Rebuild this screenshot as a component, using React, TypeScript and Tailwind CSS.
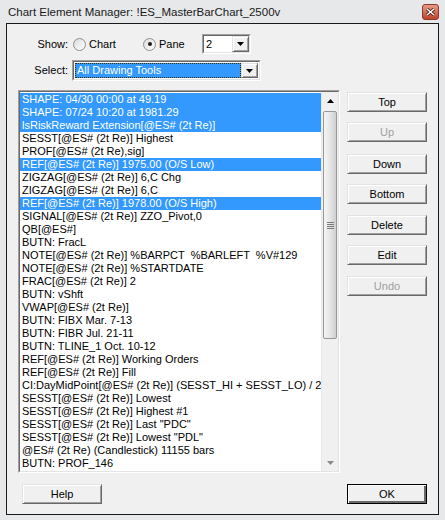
import React from 'react';

const ITEMS: [string, boolean][] = [
  ['SHAPE: 04/30 00:00 at 49.19', true],
  ['SHAPE: 07/24 10:20 at 1981.29', true],
  ['lsRiskReward Extension[@ES# (2t Re)]', true],
  ['SESST[@ES# (2t Re)] Highest', false],
  ['PROF[@ES# (2t Re),sig]', false],
  ['REF[@ES# (2t Re)] 1975.00 (O/S Low)', true],
  ['ZIGZAG[@ES# (2t Re)] 6,C Chg', false],
  ['ZIGZAG[@ES# (2t Re)] 6,C', false],
  ['REF[@ES# (2t Re)] 1978.00 (O/S High)', true],
  ['SIGNAL[@ES# (2t Re)] ZZO_Pivot,0', false],
  ['QB[@ES#]', false],
  ['BUTN: FracL', false],
  ['NOTE[@ES# (2t Re)] %BARPCT  %BARLEFT  %V#129', false],
  ['NOTE[@ES# (2t Re)] %STARTDATE', false],
  ['FRAC[@ES# (2t Re)] 2', false],
  ['BUTN: vShft', false],
  ['VWAP[@ES# (2t Re)]', false],
  ['BUTN: FIBX Mar. 7-13', false],
  ['BUTN: FIBR Jul. 21-11', false],
  ['BUTN: TLINE_1 Oct. 10-12', false],
  ['REF[@ES# (2t Re)] Working Orders', false],
  ['REF[@ES# (2t Re)] Fill', false],
  ['CI:DayMidPoint[@ES# (2t Re)] (SESST_HI + SESST_LO) / 2 "MidPoint"', false],
  ['SESST[@ES# (2t Re)] Lowest', false],
  ['SESST[@ES# (2t Re)] Highest #1', false],
  ['SESST[@ES# (2t Re)] Last "PDC"', false],
  ['SESST[@ES# (2t Re)] Lowest "PDL"', false],
  ['@ES# (2t Re) (Candlestick) 11155 bars', false],
  ['BUTN: PROF_146', false],
];

// margin before each side button, measured off the dialog
const SIDE_BUTTONS: { label: string; disabled?: boolean; mt: string }[] = [
  { label: 'Top', mt: 'mt-0' },
  { label: 'Up', disabled: true, mt: 'mt-[10px]' },
  { label: 'Down', mt: 'mt-[12px]' },
  { label: 'Bottom', mt: 'mt-[10px]' },
  { label: 'Delete', mt: 'mt-[11px]' },
  { label: 'Edit', mt: 'mt-[10px]' },
  { label: 'Undo', disabled: true, mt: 'mt-[11px]' },
];

function Button({ label, disabled, isDefault, className = '' }: { label: string; disabled?: boolean; isDefault?: boolean; className?: string }) {
  return (
    <div
      className={`flex h-[20px] w-[80px] items-center justify-center border bg-[#f0f0f0] ${
        isDefault
          ? 'border-black shadow-[inset_1px_1px_0_#ffffff,inset_-2px_-2px_0_#696969]'
          : 'border-t-[#e3e3e3] border-l-[#e3e3e3] border-r-[#696969] border-b-[#696969] shadow-[inset_1px_1px_0_#ffffff,inset_-1px_-1px_0_#a0a0a0]'
      } ${disabled ? 'text-[#a0a0a0]' : 'text-black'} ${className}`}
    >
      {label}
    </div>
  );
}

function Arrow({ color = '#000000' }: { color?: string }) {
  return (
    <svg width="7" height="4" viewBox="0 0 7 4">
      <path d="M0 0h7L3.5 4z" fill={color} />
    </svg>
  );
}

function ComboButton() {
  return (
    <div className="flex h-full w-[17px] items-center justify-center border border-t-[#e3e3e3] border-l-[#e3e3e3] border-r-[#696969] border-b-[#696969] bg-[#f0f0f0] shadow-[inset_1px_1px_0_#ffffff,inset_-1px_-1px_0_#a0a0a0]">
      <Arrow />
    </div>
  );
}

function Radio({ checked }: { checked?: boolean }) {
  return (
    <span className="flex h-[13px] w-[13px] items-center justify-center rounded-full border border-[#8f8f8f] bg-gradient-to-br from-[#dcdcdc] to-white">
      {checked && <span className="h-[4px] w-[4px] rounded-full bg-[#1c1c1c]" />}
    </span>
  );
}

export default function App() {
  return (
    <div className="flex h-[520px] w-[445px] flex-col overflow-hidden bg-[#e6e8ea] text-[11px] leading-[13px] text-black [font-family:'Liberation_Sans',Arial,sans-serif]">
      {/* title bar */}
      <div className="flex h-[23px] items-center pl-[8px] pr-[6px]">
        <span className="pt-[1px] text-[11.5px] text-[#1a1a1a]">Chart Element Manager: !ES_MasterBarChart_2500v</span>
        <div className="ml-auto flex h-[16px] w-[17px] items-center justify-center rounded-[3px] border border-[#8a3a2a] bg-gradient-to-b from-[#e59a88] to-[#c0432b]">
          <svg width="9" height="8" viewBox="0 0 9 8">
            <path d="M1 1l7 6M8 1L1 7" stroke="#4a1a10" strokeWidth="3" />
            <path d="M1 1l7 6M8 1L1 7" stroke="#ffffff" strokeWidth="1.6" />
          </svg>
        </div>
      </div>

      {/* client area */}
      <div className="ml-[6px] flex h-[492px] w-[433px] flex-col border border-[#1a1a1a] bg-[#f0f0f0]">
        <div className="mt-[10px] flex h-[20px] items-center">
          <span className="w-[61px] text-right">Show:</span>
          <div className="ml-[5px] flex w-[70px] items-center">
            <Radio />
            <span className="ml-[3px]">Chart</span>
          </div>
          <div className="flex w-[59px] items-center">
            <Radio checked />
            <span className="ml-[3px]">Pane</span>
          </div>
          <div className="flex h-[20px] w-[49px] border border-t-[#a0a0a0] border-l-[#a0a0a0] border-r-white border-b-white">
            <div className="flex flex-1 border border-t-[#696969] border-l-[#696969] border-r-[#e3e3e3] border-b-[#e3e3e3] bg-white">
              <span className="flex-1 pl-[2px] pt-[2px]">2</span>
              <ComboButton />
            </div>
          </div>
        </div>

        <div className="mt-[6px] flex h-[21px] items-center">
          <span className="w-[61px] text-right">Select:</span>
          <div className="ml-[4px] flex h-[21px] w-[189px] border border-t-[#a0a0a0] border-l-[#a0a0a0] border-r-white border-b-white">
            <div className="flex flex-1 border border-t-[#696969] border-l-[#696969] border-r-[#e3e3e3] border-b-[#e3e3e3] bg-white p-[1px]">
              <span className="flex flex-1 items-center border border-dotted border-[#3a2a00] bg-[#3399ff] pl-[1px] text-white">
                All Drawing Tools
              </span>
              <ComboButton />
            </div>
          </div>
        </div>

        <div className="mt-[9px] flex">
          {/* list box */}
          <div className="ml-[11px] flex h-[383px] w-[322px] border border-t-[#a0a0a0] border-l-[#a0a0a0] border-r-white border-b-white">
            <div className="flex flex-1 border border-t-[#696969] border-l-[#696969] border-r-[#e3e3e3] border-b-[#e3e3e3] bg-white">
              <div className="w-[301px] overflow-hidden pt-[1px]">
                {ITEMS.map(([text, sel], i) => (
                  <div
                    key={i}
                    className={`h-[13px] whitespace-pre pl-[2px] ${sel ? 'bg-[#3399ff] text-white' : ''}`}
                  >
                    {text}
                  </div>
                ))}
              </div>
              {/* scroll bar */}
              <div className="flex w-[17px] flex-col border-l border-[#e8e8e8] bg-[#f0f0f0]">
                <div className="flex h-[17px] items-center justify-center">
                  <svg width="7" height="4" viewBox="0 0 7 4">
                    <path d="M0 4h7L3.5 0z" fill="#000000" />
                  </svg>
                </div>
                <div className="mx-[1px] mt-[2px] flex h-[228px] flex-col items-center justify-center gap-[1px] rounded-[2px] border border-[#979797] bg-gradient-to-r from-[#f4f4f4] via-[#e6e6e6] to-[#cfcfcf]">
                  <span className="h-[1px] w-[7px] bg-[#7a7a7a]" />
                  <span className="h-[1px] w-[7px] bg-[#7a7a7a]" />
                  <span className="h-[1px] w-[7px] bg-[#7a7a7a]" />
                  <span className="h-[1px] w-[7px] bg-[#7a7a7a]" />
                </div>
                <div className="flex-1" />
                <div className="flex h-[17px] items-center justify-center">
                  <Arrow color="#8a8a8a" />
                </div>
              </div>
            </div>
          </div>

          {/* side buttons */}
          <div className="ml-[7px] flex flex-col pt-[2px]">
            {SIDE_BUTTONS.map((b) => (
              <Button key={b.label} label={b.label} disabled={b.disabled} className={b.mt} />
            ))}
          </div>
        </div>

        <div className="mt-[11px] flex">
          <Button label="Help" className="ml-[15px]" />
          <Button label="OK" isDefault className="ml-[245px]" />
        </div>
      </div>
    </div>
  );
}
